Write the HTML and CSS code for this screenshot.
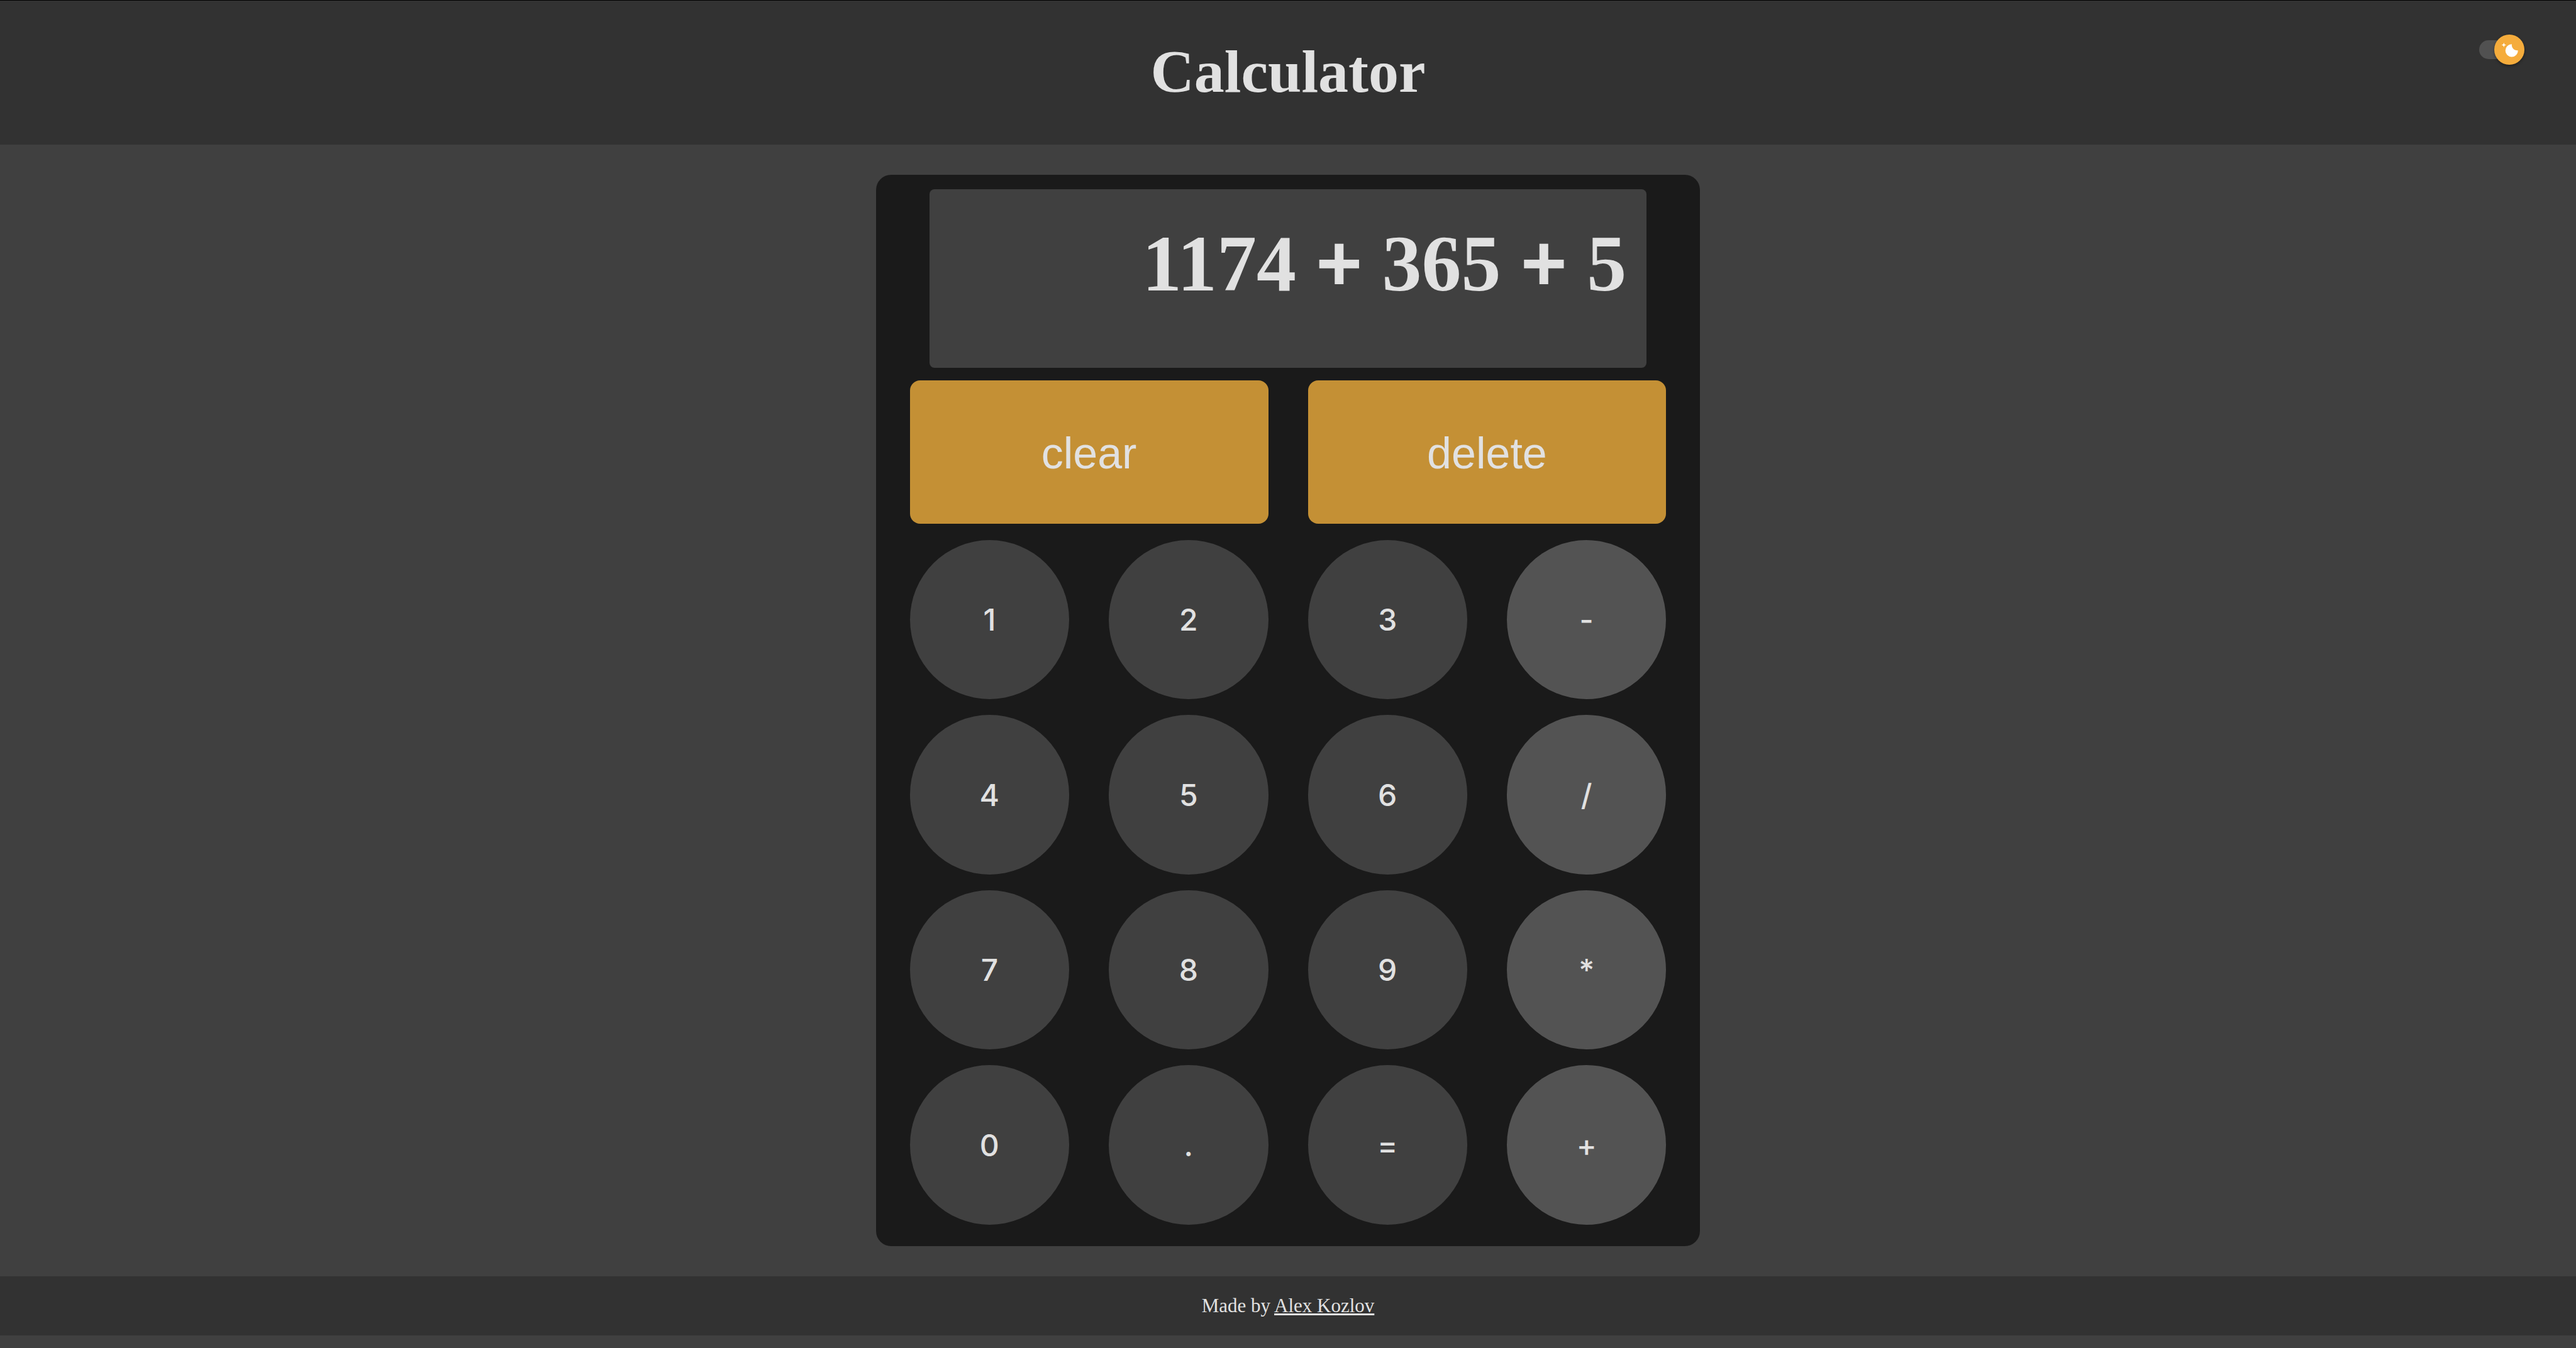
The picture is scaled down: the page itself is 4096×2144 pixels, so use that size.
FILE: index.html
```html
<!DOCTYPE html>
<html lang="en">
<head>
  <meta charset="utf-8">
  <meta name="viewport" content="width=device-width, initial-scale=1">
  <title>Calculator</title>
  <link rel="stylesheet" href="styles.css">
</head>
<body>
  <header class="header">
    <h1 class="header-title">Calculator</h1>
    <label class="theme-switch">
      <input class="theme-input" type="checkbox" role="switch" aria-label="Dark theme" checked>
      <span class="theme-thumb">
        <svg class="theme-icon" viewBox="0 0 20 20" aria-hidden="true">
          <path d="M4.2 2.5l-.7 1.8-1.8.7 1.8.7.7 1.8.6-1.8L6.7 5l-1.9-.7-.6-1.8zm15 8.3a6.7 6.7 0 11-6.6-6.6 5.8 5.8 0 006.6 6.6z"/>
        </svg>
      </span>
    </label>
  </header>

  <main class="main">
    <section class="calculator" aria-label="Calculator">
      <output class="display">1174 <span class="sign">+</span> 365 <span class="sign">+</span> 5</output>
      <div class="keypad">
        <button class="key key-wide" type="button">clear</button>
        <button class="key key-wide" type="button">delete</button>
        <button class="key" type="button">1</button>
        <button class="key" type="button">2</button>
        <button class="key" type="button">3</button>
        <button class="key key-operator" type="button">-</button>
        <button class="key" type="button">4</button>
        <button class="key" type="button">5</button>
        <button class="key" type="button">6</button>
        <button class="key key-operator" type="button">/</button>
        <button class="key" type="button">7</button>
        <button class="key" type="button">8</button>
        <button class="key" type="button">9</button>
        <button class="key key-operator" type="button">*</button>
        <button class="key" type="button">0</button>
        <button class="key" type="button">.</button>
        <button class="key" type="button">=</button>
        <button class="key key-operator" type="button">+</button>
      </div>
    </section>
  </main>

  <footer class="footer">
    <p class="credit">Made by <a class="credit-link" href="#">Alex Kozlov</a></p>
  </footer>
</body>
</html>
```
FILE: styles.css
```css
:root {
  --page: #404040;
  --bar: #323232;
  --panel: #1a1a1a;
  --key: #404040;
  --operator: #535353;
  --action: #c49035;
  --accent: #f5ac3c;
  --text: #e1e1e1;
}

* {
  box-sizing: border-box;
}

body {
  margin: 0;
  background: var(--page);
  color: var(--text);
  font-family: "Liberation Serif", "Times New Roman", serif;
}

.header {
  display: grid;
  grid-template-columns: 1fr auto 1fr;
  align-items: start;
  border-top: 1px solid #000;
  background: var(--bar);
}

.header-title {
  grid-column: 2;
  margin: 0;
  padding: 58px 0 61px;
  font-size: 96px;
  line-height: 110px;
}

.theme-switch {
  display: flex;
  align-items: center;
  justify-self: end;
  margin: 54px 82px 0 0;
  cursor: pointer;
}

.theme-input {
  appearance: none;
  width: 60px;
  height: 30px;
  margin: 0 -36px 0 0;
  border-radius: 15px;
  background: #515151;
  cursor: pointer;
}

.theme-thumb {
  display: flex;
  align-items: center;
  justify-content: center;
  width: 48px;
  height: 48px;
  border-radius: 50%;
  background: var(--accent);
  box-shadow: 0 2px 4px rgba(0, 0, 0, 0.4);
  z-index: 1;
}

.theme-icon {
  width: 30px;
  height: 30px;
  fill: #fff;
}

.main {
  display: flex;
  justify-content: center;
  padding: 48px 0;
}

.calculator {
  width: 32%;
  padding: 23px 0 34px;
  border-radius: 24px;
  background: var(--panel);
}

.display {
  display: block;
  width: 87%;
  min-height: 284px;
  margin: 0 auto 20px;
  padding: 44px 32px 0;
  border-radius: 8px;
  background: var(--key);
  font-size: 126px;
  font-weight: 700;
  line-height: 147px;
  text-align: right;
}

.sign {
  font-family: "Liberation Sans", Arial, sans-serif;
}

.keypad {
  display: grid;
  grid-template-columns: repeat(4, 1fr);
  gap: 25px 63px;
  padding: 0 54px;
}

.key {
  aspect-ratio: 1;
  padding: 0;
  border: 0;
  border-radius: 50%;
  background: var(--key);
  color: var(--text);
  font: 500 48px Inter, sans-serif;
  cursor: pointer;
}

.key-operator {
  background: var(--operator);
}

.key-wide {
  grid-column: span 2;
  aspect-ratio: auto;
  height: 228px;
  margin-bottom: 1px;
  padding-top: 4px;
  border-radius: 16px;
  background: var(--action);
  font: 400 70px "Liberation Sans", Arial, sans-serif;
}

.footer {
  margin-bottom: 20px;
  padding: 28px 0;
  background: var(--bar);
  text-align: center;
}

.credit {
  margin: 0;
  font-size: 31px;
  line-height: 38px;
}

.credit-link {
  color: inherit;
}
```
